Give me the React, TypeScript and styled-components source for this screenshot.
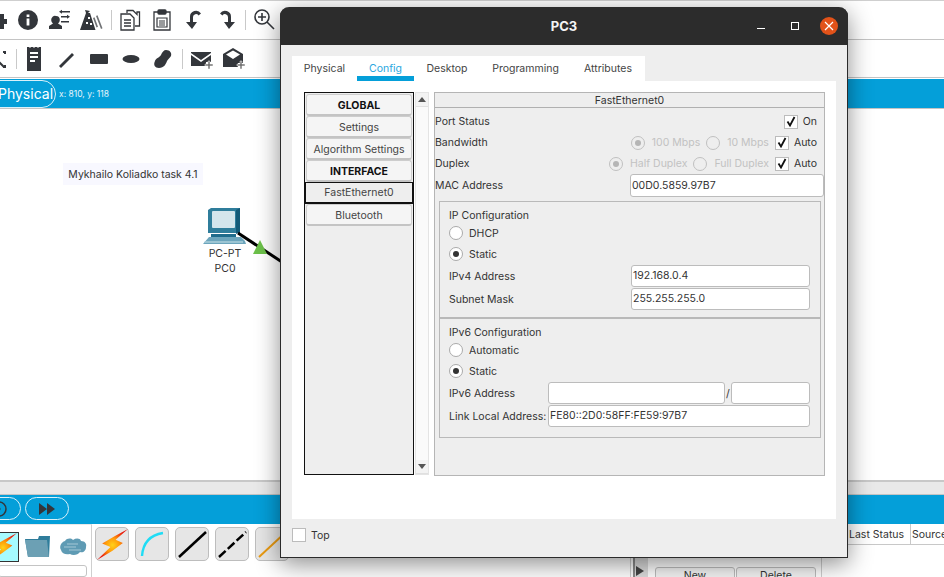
import React from "react";
import styled, { createGlobalStyle } from "styled-components";

const Global = createGlobalStyle`
  html, body { margin: 0; padding: 0; background: #fff; overflow: hidden; }
  body { font-family: Inter, "Liberation Sans", sans-serif; font-size: 10.5px; color: #333; }
  * { box-sizing: border-box; }
`;

const dark = "#33363b";

// ---- background workspace

const Page = styled.div`
  position: relative;
  width: 944px;
  height: 577px;
  overflow: hidden;
  display: flex;
  flex-direction: column;
`;

const ToolRow = styled.div<{ $h: number; $ml: number }>`
  height: ${(p) => p.$h}px;
  flex: none;
  display: flex;
  align-items: center;
  gap: 8px;
  margin-left: ${(p) => p.$ml}px;
  border-bottom: 1px solid #c4c4c4;
`;

const TopLine = styled.div`
  height: 1px;
  flex: none;
  background: #cfcfcf;
`;

const Tool = styled.svg<{ $line?: boolean }>`
  width: 24px;
  height: 24px;
  flex: none;
  fill: ${(p) => (p.$line ? "none" : dark)};
  stroke: ${(p) => (p.$line ? dark : "none")};
`;

const ToolSep = styled.div`
  width: 1px;
  height: 20px;
  background: #c9c9c9;
  flex: none;
  margin: 0 -1.5px;
`;

const BlueBar = styled.div`
  height: 29px;
  flex: none;
  margin-top: 1px;
  background: #049fd9;
  display: flex;
  align-items: center;
  color: #e6f5fb;
`;

const ModePill = styled.div`
  width: 70px;
  height: 28px;
  margin-left: -14px;
  border: 1px solid #d9f1fa;
  border-radius: 14px;
  color: #fff;
  font-size: 14px;
  display: flex;
  align-items: center;
  justify-content: center;
  padding-left: 9px;
`;

const Coords = styled.span`
  margin-left: 3px;
  font-size: 8.5px;
`;

const Canvas = styled.div`
  position: relative;
  flex: 1;
  border-top: 1px solid #c4c4c4;
  border-bottom: 2px solid #c8c8c8;
`;

const NoteLabel = styled.div`
  position: absolute;
  left: 63px;
  top: 54px;
  width: 140px;
  height: 22px;
  background: #f8f8ff;
  display: flex;
  align-items: center;
  justify-content: center;
  color: #333;
`;

const NodeWrap = styled.div`
  position: absolute;
  left: 195px;
  top: 98px;
  width: 60px;
  display: flex;
  flex-direction: column;
  align-items: center;
`;

const NodeText = styled.div`
  line-height: 15px;
  color: #333;
`;

const LinkDrawing = styled.svg`
  position: absolute;
  left: 230px;
  top: 120px;
  width: 60px;
  height: 50px;
`;

const GreyStrip = styled.div`
  height: 13px;
  flex: none;
  background: #e9e9e9;
  border-bottom: 1px solid #c4c4c4;
`;

const BlueBottom = styled.div`
  height: 29px;
  flex: none;
  background: #049fd9;
  display: flex;
  align-items: center;
  gap: 4px;
  padding-bottom: 2px;
`;

const RoundBtn = styled.div<{ $clip?: boolean }>`
  width: 44px;
  height: 23px;
  flex: none;
  border: 1px solid #d9f1fa;
  border-radius: 12px;
  margin-left: ${(p) => (p.$clip ? "-23px" : "0")};
  display: flex;
  align-items: center;
  justify-content: center;
`;

const BottomArea = styled.div`
  height: 53px;
  flex: none;
  display: flex;
`;

const DeviceTypes = styled.div`
  width: 92px;
  flex: none;
  border-right: 1px solid #cfcfcf;
  border-top: 1px solid #e8e8e8;
  display: flex;
  flex-direction: column;
  padding-top: 7px;
  overflow: hidden;
`;

const TypeRow = styled.div`
  display: flex;
  align-items: center;
  gap: 3px;
  margin-left: -13px;
`;

const TypeCell = styled.div<{ $active?: boolean }>`
  width: 32px;
  height: 30px;
  flex: none;
  display: flex;
  align-items: center;
  justify-content: center;
  background: ${(p) => (p.$active ? "#a6fbff" : "transparent")};
  border: ${(p) => (p.$active ? "1px solid #333" : "none")};
`;

const SearchBox = styled.div`
  height: 20px;
  width: 89px;
  margin: 3px 0 0 -2px;
  border: 1px solid #c4c4c4;
  border-radius: 3px;
`;

const CableRow = styled.div`
  flex: 1;
  display: flex;
  gap: 6px;
  padding: 3px 0 0 3px;
  min-width: 0;
`;

const CableBtn = styled.div`
  width: 34px;
  height: 34px;
  flex: none;
  background: #e6e6e6;
  border: 1px solid #bdbdbd;
  border-radius: 5px;
  display: flex;
  align-items: center;
  justify-content: center;
`;

const ScenarioPane = styled.div`
  width: 192px;
  flex: none;
  border-left: 1px solid #cfcfcf;
  border-right: 1px solid #cfcfcf;
  display: flex;
  align-items: flex-end;
  gap: 7px;
  padding-left: 2px;
`;

const Gripper = styled.div`
  position: relative;
  width: 15px;
  height: 100%;
  background: #dcdcdc;
  border-left: 2px solid #8a8a8a;
  &::after {
    content: "";
    position: absolute;
    left: 1px;
    bottom: 1px;
    border-left: 8px solid #444;
    border-top: 5px solid transparent;
    border-bottom: 5px solid transparent;
  }
`;

const ScenarioBtns = styled.div`
  display: flex;
  gap: 1px;
  margin-bottom: -8px;
`;

const ScenarioBtn = styled.div`
  width: 80px;
  height: 18px;
  border: 1px solid #bdbdbd;
  border-radius: 3px 3px 0 0;
  text-align: center;
  line-height: 16px;
  background: #f4f4f4;
`;

const PduTable = styled.div`
  width: 122px;
  flex: none;
  display: flex;
  height: 21px;
  padding-left: 26px;
  border-bottom: 1px solid #c8c8c8;
  line-height: 22px;
  overflow: hidden;
  white-space: nowrap;
`;

const PduCol = styled.div<{ $w: number }>`
  width: ${(p) => p.$w}px;
  flex: none;
  padding-left: 1px;
  border-right: 1px solid #c8c8c8;
`;

// ---- PC3 dialog

const Dialog = styled.div`
  position: absolute;
  left: 280px;
  top: 7px;
  width: 568px;
  height: 551px;
  border-radius: 9px 9px 0 0;
  background: #eeeeee;
  border: 1px solid #2b2b2b;
  border-top: none;
  box-shadow: 0 6px 24px rgba(0, 0, 0, 0.45);
  display: flex;
  flex-direction: column;
`;

const TitleBar = styled.div`
  position: relative;
  height: 38px;
  flex: none;
  background: #2c2c2c;
  border-radius: 9px 9px 0 0;
  margin: 0 -1px;
  color: #f4f4f4;
  font-weight: 700;
  font-size: 13px;
  display: flex;
  align-items: center;
  justify-content: center;
`;

const WinBtns = styled.div`
  position: absolute;
  right: 10px;
  top: 10px;
  display: flex;
  align-items: center;
  gap: 26px;
`;

const MinIcon = styled.span`
  width: 8px;
  height: 1px;
  margin-top: 4px;
  background: #fff;
`;

const MaxIcon = styled.span`
  width: 8px;
  height: 8px;
  border: 1px solid #fff;
`;

const CloseBtn = styled.span`
  width: 18px;
  height: 18px;
  border-radius: 50%;
  background: #e25219;
  display: flex;
  align-items: center;
  justify-content: center;
  margin-left: -5px;
`;

const DialogBody = styled.div`
  flex: 1;
  display: flex;
  flex-direction: column;
  padding: 11px 11px 0 11px;
`;

const TabStrip = styled.div`
  height: 25px;
  flex: none;
  width: 353px;
  background: #fff;
  display: flex;
`;

const Tab = styled.div<{ $active?: boolean; $w: number }>`
  width: ${(p) => p.$w}px;
  flex: none;
  height: 25px;
  text-align: center;
  line-height: 26px;
  color: ${(p) => (p.$active ? "#2aa7e0" : "#444")};
  border-bottom: ${(p) => (p.$active ? "5px solid #049fd9" : "none")};
`;

const Content = styled.div`
  height: 438px;
  flex: none;
  background: #fff;
  padding: 11px 11px 0 12px;
  display: flex;
`;

const SideList = styled.div`
  width: 110px;
  height: 383px;
  flex: none;
  border: 1px solid #111;
  padding: 1px;
  background: #eeeeee;
  display: flex;
  flex-direction: column;
`;

const SideItem = styled.div<{ $head?: boolean; $active?: boolean }>`
  height: 22px;
  flex: none;
  text-align: center;
  line-height: ${(p) => (p.$active ? "20px" : "21px")};
  font-weight: ${(p) => (p.$head ? 700 : 400)};
  color: ${(p) => (p.$head ? "#111" : "#444")};
  background: ${(p) => (p.$active ? "#eeeeee" : "#f5f5f5")};
  border: ${(p) => (p.$active ? "1px solid #111" : "1px solid #cdcdcd")};
  border-bottom: ${(p) => (p.$active ? "2px solid #111" : "2px solid #c4c4c4")};
  border-radius: ${(p) => (p.$active ? "0" : "3px")};
  margin: ${(p) => (p.$active ? "0 -1px" : "0")};
  white-space: nowrap;
`;

const ScrollTrack = styled.div`
  width: 14px;
  height: 383px;
  flex: none;
  margin-left: 1px;
  border: 1px solid #e4e4e4;
  background: #fafafa;
  display: flex;
  flex-direction: column;
  justify-content: space-between;
  align-items: center;
`;

const ArrowBox = styled.div`
  width: 100%;
  height: 14px;
  display: flex;
  align-items: center;
  justify-content: center;
  border-bottom: 1px solid #e0e0e0;
  background: #f3f3f3;
`;

const Panel = styled.div`
  width: 391px;
  height: 384px;
  flex: none;
  margin: 0 0 0 5px;
  border: 1px solid #b5b5b5;
  background: #eeeeee;
  display: flex;
  flex-direction: column;
`;

const PanelHead = styled.div`
  height: 15px;
  flex: none;
  border-bottom: 1px solid #b0b0b0;
  text-align: center;
  line-height: 15px;
`;

const Row = styled.div<{ $h?: number; $mt?: number }>`
  height: ${(p) => p.$h ?? 21}px;
  flex: none;
  display: flex;
  align-items: center;
  margin-top: ${(p) => p.$mt ?? 0}px;
  white-space: nowrap;
`;

const FieldLabel = styled.span`
  flex: 1;
`;

const Opt = styled.span<{ $off?: boolean; $mr?: number }>`
  color: ${(p) => (p.$off ? "#c2c2c2" : "#333")};
  margin-right: ${(p) => p.$mr ?? 0}px;
`;

const CheckBox = styled.span`
  width: 14px;
  height: 14px;
  flex: none;
  background: #fff;
  border: 1px solid #bcbcbc;
  margin-right: 5px;
  display: flex;
  align-items: center;
  justify-content: center;
`;

const Radio = styled.span<{ $on?: boolean; $off?: boolean }>`
  width: 14px;
  height: 14px;
  flex: none;
  border-radius: 50%;
  border: 1px solid ${(p) => (p.$off ? "#c0c0c0" : "#aaa")};
  background: ${(p) => (p.$off ? "#eeeeee" : "#fff")};
  margin-right: ${(p) => (p.$off ? 7 : 6)}px;
  display: flex;
  align-items: center;
  justify-content: center;
  &::after {
    content: "";
    display: ${(p) => (p.$on ? "block" : "none")};
    width: 6px;
    height: 6px;
    border-radius: 50%;
    background: ${(p) => (p.$off ? "#b5b5b5" : "#333")};
  }
`;

const Field = styled.div<{ $w: number; $h?: number; $mr?: number }>`
  width: ${(p) => p.$w}px;
  height: ${(p) => p.$h ?? 22}px;
  flex: none;
  margin-right: ${(p) => p.$mr ?? 0}px;
  background: #fff;
  border: 1px solid #bcbcbc;
  border-radius: 3px;
  padding-left: 1px;
  line-height: ${(p) => (p.$h ?? 22) - 2}px;
  color: #333;
`;

const GroupBox = styled.div<{ $h: number; $top: number }>`
  width: 382px;
  height: ${(p) => p.$h}px;
  flex: none;
  margin: ${(p) => p.$top}px 0 0 4px;
  border: 1px solid #b9b9b9;
  padding: 7px 0 0 9px;
`;

const GroupTitle = styled.div`
  line-height: 13px;
  height: 13px;
`;

const Slash = styled.span`
  width: 6px;
  flex: none;
  text-align: center;
`;

const Footer = styled.div`
  flex: 1;
  display: flex;
  align-items: center;
  padding-bottom: 6px;
`;

const TopCheck = styled.span`
  width: 14px;
  height: 14px;
  background: #fff;
  border: 1px solid #bcbcbc;
  margin-right: 5px;
`;

const Tick = () => (
  <svg width="10" height="11" viewBox="0 0 10 11">
    <path d="M1.500 5.500 L4 9.500 L8.500 1" fill="none" stroke="#111" strokeWidth="1.800" />
  </svg>
);

const Bolt = ({ id, size }: { id: string; size: number }) => (
  <svg width={size} height={size} viewBox="0 0 30 30">
    <defs>
      <radialGradient id={id} cx="50%" cy="52%" r="50%">
        <stop offset="0%" stopColor="#ffd21a" />
        <stop offset="45%" stopColor="#ff9a0a" />
        <stop offset="100%" stopColor="#e8170c" />
      </radialGradient>
    </defs>
    <path d="M30 0L17 7 5 14l8 3.500L0 30l15-9 10-7.500-7-3z" fill={`url(#${id})`} />
  </svg>
);

export default function App() {
  return (
    <>
      <Global />
      <Page>
        <TopLine />
        <ToolRow $h={39} $ml={-16}>
          <Tool viewBox="0 0 24 24">
            <path d="M2 6h8V3h5v3h5v5h3v5h-3v5H2z" />
          </Tool>
          <Tool viewBox="0 0 24 24">
            <path fillRule="evenodd" d="M12 2a10 10 0 1 0 0 20a10 10 0 0 0 0-20zM10.600 6.500h2.800v2.600h-2.800zM10.600 10.500h2.800v7h-2.800z" />
          </Tool>
          <Tool viewBox="0 0 24 24">
            <path d="M8 8a3.800 3.800 0 0 1 3.800 3.800c0 1.700-.8 3-1.800 3.700l4 2.500v3H1v-3l4-2.500c-1-.7-1.800-2-1.800-3.700A3.800 3.800 0 0 1 8 8z" />
            <path d="M14 3h8v1.500h-8zM11 3.800l3-2v4zM13 8h6v1.500h-6zM22 8.800l-3-2v4zM13 13h8v1.500h-8z" />
          </Tool>
          <Tool viewBox="0 0 24 24">
            <path fillRule="evenodd" d="M5 2l5 1-2 2h2l5.500 17H0L6 5zM8 9h2v2H8zM6 14h2v2H6zM10 15h2v2h-2z" />
            <path d="M16 8l1.500-.8 5 13-1.500.8zM13 10l1.500-.8 3.500 9.500-1.500.8z" opacity=".7" />
          </Tool>
          <ToolSep />
          <Tool $line viewBox="0 0 24 24" strokeWidth="1.300">
            <path d="M9 5V2.500h6l4 4V4h2.500v14H17" />
            <path d="M3 6h9l4 4v12H3z" fill="#fff" />
            <path d="M6 12h7M6 15h7M6 18h7" strokeWidth="1.500" />
          </Tool>
          <Tool $line viewBox="0 0 24 24" strokeWidth="1.300">
            <path d="M8 4H4v18h16V4h-4" />
            <rect x="8" y="2" width="8" height="4" rx="1" fill={dark} />
            <path d="M7 10h10v9H7zM9 13h6M9 15h6M9 17h6" strokeWidth="1.200" />
          </Tool>
          <Tool viewBox="0 0 24 24">
            <path d="M10 21l-6-7h4V9a6 6 0 0 1 11-3.500l-2.500 2A3 3 0 0 0 11 9v5h4z" />
          </Tool>
          <Tool viewBox="0 0 24 24">
            <path d="M15 21l6-7h-4V9A6 6 0 0 0 6 5.500l2.500 2A3 3 0 0 1 14 9v5h-4z" />
          </Tool>
          <ToolSep />
          <Tool $line viewBox="0 0 24 24" strokeWidth="1.600">
            <circle cx="10" cy="9" r="7" />
            <path d="M15 14l7 7M10 5v8M6 9h8" />
          </Tool>
        </ToolRow>
        <ToolRow $h={38} $ml={-15}>
          <Tool $line viewBox="0 0 24 24" strokeWidth="2">
            <path d="M4 5l15 15M18 5h2v2M18 20h2v-2" />
          </Tool>
          <ToolSep />
          <Tool viewBox="0 0 24 24">
            <path fillRule="evenodd" d="M4 -1h2v1.500h2V-1h2v1.500h2V-1h2v1.500h2V-1h2v25H4zM7 5h8v2H7zM7 9h8v2H7zM7 13h5v2H7z" />
          </Tool>
          <Tool viewBox="0 0 24 24">
            <path d="M4 19l13-13 2 2-13 13z" />
          </Tool>
          <Tool viewBox="0 0 24 24">
            <rect x="3" y="7" width="18" height="10" rx="1" />
          </Tool>
          <Tool viewBox="0 0 24 24">
            <ellipse cx="12" cy="12" rx="8.500" ry="4" />
          </Tool>
          <Tool viewBox="0 0 24 24">
            <path d="M15 3c4 0 6 3 5 6-1 2-3 3-4 5-1 3-3 7-8 7-4 0-6-3-4-7 1-3 4-3 6-6 1-3 3-5 5-5z" />
          </Tool>
          <ToolSep />
          <Tool viewBox="0 0 24 24">
            <path d="M2 5h20v1L12 13 2 6zM2 8l10 7 10-7v7h-5v4H2z" />
            <path d="M19 14h2v3h3v2h-3v3h-2v-3h-3v-2h3z" fill="#777" stroke="#fff" strokeWidth=".5" />
          </Tool>
          <Tool viewBox="0 0 24 24">
            <path fillRule="evenodd" d="M12 1l10 6v9h-5v4H2V7zM12 3.500L5 7.500l7 4.500 7-4.500z" />
            <path d="M19 14h2v3h3v2h-3v3h-2v-3h-3v-2h3z" fill="#777" stroke="#fff" strokeWidth=".5" />
          </Tool>
        </ToolRow>
        <BlueBar>
          <ModePill>Physical</ModePill>
          <Coords>x: 810, y: 118</Coords>
        </BlueBar>
        <Canvas>
          <NoteLabel>Mykhailo Koliadko task 4.1</NoteLabel>
          <NodeWrap>
            <svg width="44" height="39" viewBox="0 0 44 39">
              <path d="M5 3l3-2h29v25H5z" fill="#2f7d9b" />
              <path d="M33 3l4-2v24l-4 2z" fill="#135a78" />
              <rect x="9" y="4" width="23" height="17" rx="1" fill="#d4e5ec" />
              <path d="M8 27h25v3H8z" fill="#1f6c8c" />
              <path d="M6 30h32l4 4 1 3H0z" fill="#6ca5bc" />
              <path d="M2 34h38v2H1z" fill="#9cc5d3" />
            </svg>
            <NodeText>PC-PT</NodeText>
            <NodeText>PC0</NodeText>
          </NodeWrap>
          <LinkDrawing viewBox="0 0 60 50">
            <line x1="8" y1="4" x2="52" y2="33" stroke="#000" strokeWidth="3" />
            <path d="M30 11L37 25H23z" fill="#6cc04a" />
          </LinkDrawing>
        </Canvas>
        <GreyStrip />
        <BlueBottom>
          <RoundBtn $clip>
            <svg width="20" height="20" viewBox="0 0 20 20">
              <circle cx="10" cy="10" r="7" fill="none" stroke={dark} strokeWidth="1.500" />
              <circle cx="10" cy="10" r="1.500" fill={dark} />
            </svg>
          </RoundBtn>
          <RoundBtn>
            <svg width="18" height="12" viewBox="0 0 18 12">
              <path d="M1 0l8 6-8 6zM9 0l8 6-8 6z" fill={dark} />
            </svg>
          </RoundBtn>
        </BlueBottom>
        <BottomArea>
          <DeviceTypes>
            <TypeRow>
              <TypeCell $active>
                <Bolt id="boltType" size={28} />
              </TypeCell>
              <TypeCell>
                <svg width="28" height="26" viewBox="0 0 28 26">
                  <path d="M1 5h13l1-3h11l-1 21H4z" fill="#2f7d9b" />
                  <path d="M1 6h22l2 17H4z" fill="#6ca0b4" />
                </svg>
              </TypeCell>
              <TypeCell>
                <svg width="28" height="18" viewBox="0 0 28 18">
                  <path d="M6 3c2-3 6-3 8-1 3-2 7-2 8 1 4 0 6 3 5 6 0 4-3 6-6 5-2 3-7 4-10 2-4 1-8 0-9-4-2-3 0-8 4-9z" fill="#5f9bb4" />
                  <path d="M8 6h11M5 9h12M10 12h12" stroke="#a6c8d6" strokeWidth="1" />
                </svg>
              </TypeCell>
            </TypeRow>
            <SearchBox />
          </DeviceTypes>
          <CableRow>
            <CableBtn>
              <Bolt id="boltCable" size={31} />
            </CableBtn>
            <CableBtn>
              <svg width="28" height="28" viewBox="0 0 28 28">
                <path d="M4 26C5 13 12 5 25 3" fill="none" stroke="#1fdcf5" strokeWidth="2.400" />
              </svg>
            </CableBtn>
            <CableBtn>
              <svg width="30" height="30" viewBox="0 0 30 30">
                <path d="M2 28L29 3" stroke="#000" strokeWidth="2.500" />
              </svg>
            </CableBtn>
            <CableBtn>
              <svg width="30" height="30" viewBox="0 0 30 30">
                <path d="M2 28L29 3" stroke="#000" strokeWidth="2.500" strokeDasharray="9 3" />
              </svg>
            </CableBtn>
            <CableBtn>
              <svg width="30" height="30" viewBox="0 0 30 30">
                <path d="M2 28L29 3" stroke="#e99a12" strokeWidth="2" />
              </svg>
            </CableBtn>
          </CableRow>
          <ScenarioPane>
            <Gripper />
            <ScenarioBtns>
              <ScenarioBtn>New</ScenarioBtn>
              <ScenarioBtn>Delete</ScenarioBtn>
            </ScenarioBtns>
          </ScenarioPane>
          <PduTable>
            <PduCol $w={63}>Last Status</PduCol>
            <PduCol $w={60}>Source</PduCol>
          </PduTable>
        </BottomArea>

        <Dialog>
          <TitleBar>
            PC3
            <WinBtns>
              <MinIcon />
              <MaxIcon />
              <CloseBtn>
                <svg width="10" height="10" viewBox="0 0 10 10">
                  <path d="M1 1l8 8M9 1l-8 8" stroke="#fff" strokeWidth="1.200" />
                </svg>
              </CloseBtn>
            </WinBtns>
          </TitleBar>
          <DialogBody>
            <TabStrip>
              <Tab $w={65}>Physical</Tab>
              <Tab $w={57} $active>Config</Tab>
              <Tab $w={66}>Desktop</Tab>
              <Tab $w={91}>Programming</Tab>
              <Tab $w={74}>Attributes</Tab>
            </TabStrip>
            <Content>
              <SideList>
                <SideItem $head>GLOBAL</SideItem>
                <SideItem>Settings</SideItem>
                <SideItem>Algorithm Settings</SideItem>
                <SideItem $head>INTERFACE</SideItem>
                <SideItem $active>FastEthernet0</SideItem>
                <SideItem>Bluetooth</SideItem>
              </SideList>
              <ScrollTrack>
                <ArrowBox>
                  <svg width="8" height="5" viewBox="0 0 8 5"><path d="M4 0l4 5H0z" fill="#555" /></svg>
                </ArrowBox>
                <ArrowBox>
                  <svg width="8" height="5" viewBox="0 0 8 5"><path d="M0 0h8L4 5z" fill="#555" /></svg>
                </ArrowBox>
              </ScrollTrack>
              <Panel>
                <PanelHead>FastEthernet0</PanelHead>
                <Row $mt={3}>
                  <FieldLabel>Port Status</FieldLabel>
                  <CheckBox><Tick /></CheckBox>
                  <Opt $mr={7}>On</Opt>
                </Row>
                <Row>
                  <FieldLabel>Bandwidth</FieldLabel>
                  <Radio $on $off />
                  <Opt $off $mr={6}>100 Mbps</Opt>
                  <Radio $off />
                  <Opt $off $mr={6}>10 Mbps</Opt>
                  <CheckBox><Tick /></CheckBox>
                  <Opt $mr={7}>Auto</Opt>
                </Row>
                <Row>
                  <FieldLabel>Duplex</FieldLabel>
                  <Radio $on $off />
                  <Opt $off $mr={6}>Half Duplex</Opt>
                  <Radio $off />
                  <Opt $off $mr={6}>Full Duplex</Opt>
                  <CheckBox><Tick /></CheckBox>
                  <Opt $mr={7}>Auto</Opt>
                </Row>
                <Row $h={23}>
                  <FieldLabel>MAC Address</FieldLabel>
                  <Field $w={194} $h={23}>00D0.5859.97B7</Field>
                </Row>
                <GroupBox $h={117} $top={4}>
                  <GroupTitle>IP Configuration</GroupTitle>
                  <Row $h={22}><Radio />DHCP</Row>
                  <Row $h={20}><Radio $on />Static</Row>
                  <Row $h={24}>
                    <FieldLabel>IPv4 Address</FieldLabel>
                    <Field $w={179} $mr={10}>192.168.0.4</Field>
                  </Row>
                  <Row $h={22}>
                    <FieldLabel>Subnet Mask</FieldLabel>
                    <Field $w={179} $mr={10}>255.255.255.0</Field>
                  </Row>
                </GroupBox>
                <GroupBox $h={120} $top={0}>
                  <GroupTitle>IPv6 Configuration</GroupTitle>
                  <Row $h={22}><Radio />Automatic</Row>
                  <Row $h={20}><Radio $on />Static</Row>
                  <Row $h={24}>
                    <FieldLabel>IPv6 Address</FieldLabel>
                    <Field $w={177}></Field>
                    <Slash>/</Slash>
                    <Field $w={79} $mr={10}></Field>
                  </Row>
                  <Row $h={22}>
                    <FieldLabel>Link Local Address:</FieldLabel>
                    <Field $w={262} $mr={10}>FE80::2D0:58FF:FE59:97B7</Field>
                  </Row>
                </GroupBox>
              </Panel>
            </Content>
            <Footer>
              <TopCheck />
              Top
            </Footer>
          </DialogBody>
        </Dialog>
      </Page>
    </>
  );
}
